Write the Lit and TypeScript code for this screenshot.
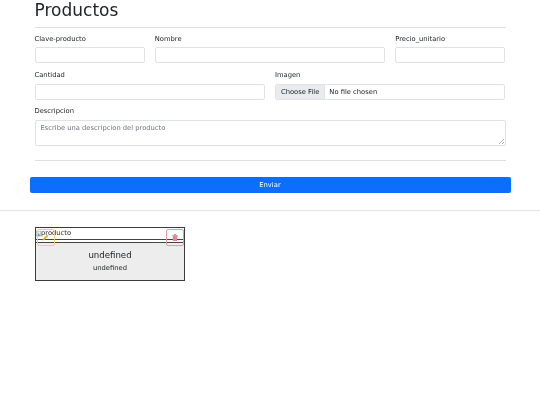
import { LitElement, html, css } from "lit";
import { customElement } from "lit/decorators.js";

@customElement("app-root")
export class AppRoot extends LitElement {
  static styles = css`
    :host { display: block; width: 540px; height: 405px; background: #fff; overflow: hidden; font-family: "DejaVu Sans", sans-serif; color: #212529; font-size: 6.75px; filter: blur(0.25px); }
    * { box-sizing: border-box; }
    .wrap { padding: 0 34.5px; }
    h1 { margin: 0; font-size: 17px; font-weight: 400; line-height: 20px; height: 27px; color: #212529; }
    .rule { height: 1px; background: #dfe0e2; border: 0; margin: 0; }
    .r1 { display: grid; grid-template-columns: 110.2px 230.4px 110.2px; column-gap: 10.1px; margin-top: 7px; }
    .r2 { display: grid; grid-template-columns: 230.4px 230.4px; column-gap: 10.1px; margin-top: 8px; }
    .r3 { margin-top: 7px; }
    label { display: block; height: 13px; line-height: 9px; color: #212529; }
    .r1 label { height: 12px; }
    .ctl { display: block; border: 1px solid #dee2e6; border-radius: 2px; background: #fff; }
    .r1 .ctl, .r2 .ctl { height: 16px; }
    .file { display: flex; align-items: center; overflow: hidden; color: #212529; }
    .choose { background: #e9ecef; height: 100%; display: flex; align-items: center; padding: 0 5px; border-right: 1px solid #dee2e6; margin-right: 4px; }
    .area { height: 26px; padding: 3px 5px; color: #6c757d; position: relative; }
    .grip { position: absolute; right: 1px; bottom: 1px; }
    .rule2 { margin-top: 14px; }
    .send { display: flex; justify-content: center; align-items: center; margin: 16px 29.5px 0; height: 16px; background: #0d6efd; color: #fff; border-radius: 2px; }
    .full { margin-top: 17px; }
    .card { position: relative; margin: 16px 0 0 35px; width: 150px; height: 54px; border: 1.3px solid #3a3a3a; background: #ededed; display: flex; flex-direction: column; }
    .pic { height: 12px; background: #fff; border-bottom: 1.6px solid #444; display: flex; align-items: center; line-height: 9px; }
    .sep { height: 3px; border-bottom: 1.2px solid #444; background: #fff; }
    .body { display: flex; flex-direction: column; align-items: center; flex: 1; padding-top: 6px; }
    .t { font-size: 8.6px; line-height: 13px; color: #212529; }
    .s { font-size: 6.75px; line-height: 13px; }
    .btn { position: absolute; top: 1px; width: 18px; height: 17px; border-radius: 2px; display: flex; align-items: center; justify-content: center; }
    .edit { left: 0.5px; border: 1px solid #efcd80; }
    .edit path { fill: #e3b52c; }
    .del { right: 0.5px; border: 1px solid #e79aa3; }
    .del path { fill: #dd8791; }
  `;
  render() {
    return html`
      <div class="wrap">
        <h1>Productos</h1>
        <div class="rule"></div>
        <div class="r1">
          <div><label>Clave-producto</label><div class="ctl"></div></div>
          <div><label>Nombre</label><div class="ctl"></div></div>
          <div><label>Precio_unitario</label><div class="ctl"></div></div>
        </div>
        <div class="r2">
          <div><label>Cantidad</label><div class="ctl"></div></div>
          <div><label>Imagen</label><div class="ctl file"><span class="choose">Choose File</span>No file chosen</div></div>
        </div>
        <div class="r3">
          <label>Descripcion</label>
          <div class="ctl area">Escribe una descripcion del producto
            <svg class="grip" width="5" height="5" viewBox="0 0 5 5"><path d="M0 5L5 0M3 5L5 3" stroke="#888" stroke-width=".6"/></svg>
          </div>
        </div>
        <div class="rule rule2"></div>
      </div>
      <div class="send">Enviar</div>
      <div class="rule full"></div>
      <div class="card">
        <div class="pic">
          <svg width="5" height="8" viewBox="0 0 6 8"><rect x=".3" y=".5" width="5.4" height="6" fill="#e4ebf5" stroke="#a0a8b0" stroke-width=".6"/><path d="M.5 6.5L3 3l2.5 3.5z" fill="#6aa86a"/></svg>
          <span>producto</span>
        </div>
        <div class="sep"></div>
        <div class="body">
          <div class="t">undefined</div>
          <div class="s">undefined</div>
        </div>
        <div class="btn edit"><svg width="9" height="9" viewBox="0 0 9 9"><path d="M1.5 7.5L2 5.5 6 1.5l1.5 1.5-4 4z"/></svg></div>
        <div class="btn del"><svg width="8" height="9" viewBox="0 0 8 9"><path d="M1 2h6v.8H1zM3 1h2v1H3zM1.6 3h4.8L6 8H2z"/></svg></div>
      </div>
    `;
  }
}
